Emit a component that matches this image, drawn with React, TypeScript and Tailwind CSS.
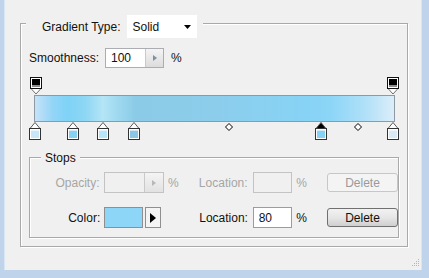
import type { ReactNode } from "react";

const colorStops = [
  { left: 0, color: "#c8e6f8" },
  { left: 38, color: "#86d0f2" },
  { left: 68, color: "#b7e4f6" },
  { left: 99, color: "#8bc6e3" },
  { left: 286, color: "#86d2f5", selected: true },
  { left: 358, color: "#d8ecf8" },
];

function OpacityStop() {
  return (
    <svg width="12" height="18" viewBox="0 0 12 18">
      <path d="M1 11.5 L6 17 L11 11.5" fill="#fff" stroke="#707070" />
      <rect x="0.5" y="0.5" width="11" height="11" fill="#fff" stroke="#111" />
      <rect x="2" y="2" width="8" height="6" fill="#000" />
      <rect x="2" y="8" width="8" height="2" fill="#8c8c8c" />
    </svg>
  );
}

function ColorStop({ color, selected }: { color: string; selected?: boolean }) {
  return (
    <svg width="12" height="18" viewBox="0 0 12 18">
      <path d="M6 0.5 L11 6.5 L1 6.5 Z" fill={selected ? "#000" : "#fff"} stroke="#5a5a5a" />
      <rect x="0.5" y="6.5" width="11" height="11" fill="#fff" stroke="#333" />
      <rect x="2" y="8" width="8" height="8" fill={color} />
      <rect x="2" y="8" width="8" height="1" fill="#fff" opacity="0.6" />
    </svg>
  );
}

function Diamond() {
  return (
    <svg width="8" height="8" viewBox="0 0 8 8">
      <path d="M4 0.5 L7.5 4 L4 7.5 L0.5 4 Z" fill="#fff" stroke="#000" />
    </svg>
  );
}

function SpinArrow({ fill }: { fill: string }) {
  return (
    <svg width="4" height="6" viewBox="0 0 4 6">
      <path d="M0 0 L4 3 L0 6 Z" fill={fill} />
    </svg>
  );
}

function Row({ children, className = "" }: { children: ReactNode; className?: string }) {
  return <div className={`flex h-[21px] items-center leading-none ${className}`}>{children}</div>;
}

export default function App() {
  return (
    <div className="flex h-[278px] w-[429px] flex-col overflow-hidden bg-[#f0f0f0] font-['Liberation_Sans',Arial,sans-serif] text-[12px] text-[#111]">
      <div className="flex flex-1">
        <div className="w-[5px] border-r border-[#d9e5f3] bg-[#bfd3eb]" />

        <div className="flex w-[416px] flex-col pl-[15px] pt-[23px]">
          {/* Gradient group */}
          <div className="w-[388px] border border-[#a9a9a9] pb-[8px] shadow-[inset_1px_1px_0_#fff,1px_1px_0_#fff]">
            <div className="-mt-[9px] ml-[5px] flex h-[23px] w-fit items-center bg-[#f0f0f0] pl-[16px] pr-[6px] leading-none">
              <span>Gradient Type:</span>
              <div className="ml-[6px] flex h-[23px] w-[70px] items-center justify-between bg-white pl-[6px] pr-[6px]">
                <span>Solid</span>
                <svg width="7" height="4" viewBox="0 0 7 4">
                  <path d="M0 0 L7 0 L3.5 4 Z" fill="#000" />
                </svg>
              </div>
            </div>

            <div className="ml-[8px] mt-[10px] flex h-[20px] items-center leading-none">
              <span className="w-[76px]">Smoothness:</span>
              <div className="flex h-[20px] w-[59px] border border-[#abadb3] bg-white">
                <span className="flex flex-1 items-center pl-[5px]">100</span>
                <div className="flex w-[18px] items-center justify-center border-l border-[#c9c9c9] bg-gradient-to-b from-[#f4f4f4] to-[#dcdcdc]">
                  <SpinArrow fill="#7c90a8" />
                </div>
              </div>
              <span className="ml-[7px]">%</span>
            </div>

            {/* Gradient editor */}
            <div className="ml-[8px] mt-[9px] w-[370px]">
              <div className="relative h-[18px]">
                <div className="absolute left-[1px] top-0">
                  <OpacityStop />
                </div>
                <div className="absolute left-[358px] top-0">
                  <OpacityStop />
                </div>
              </div>
              <div className="ml-[5px] h-[27px] w-[361px] border border-[#8d99a4] bg-[linear-gradient(to_right,#c6e2f9_0%,#93d5f7_5%,#7fd3f7_9%,#8ed6f4_14%,#b4e5f6_19%,#9fd9f0_23%,#8bcbe7_28%,#8ccdeb_50%,#87d3f5_75%,#8bd5f7_82%,#b0e0f8_92%,#dcedf9_100%)]" />
              <div className="relative h-[18px]">
                {colorStops.map((s, i) => (
                  <div key={i} className="absolute top-0" style={{ left: s.left }}>
                    <ColorStop color={s.color} selected={s.selected} />
                  </div>
                ))}
                <div className="absolute left-[196px] top-[1px]">
                  <Diamond />
                </div>
                <div className="absolute left-[325px] top-[1px]">
                  <Diamond />
                </div>
              </div>
            </div>

            {/* Stops group */}
            <div className="ml-[8px] mt-[17px] w-[370px] border border-[#a9a9a9] pb-[9px] shadow-[inset_1px_1px_0_#fff,1px_1px_0_#fff]">
              <div className="-mt-[8px] ml-[11px] flex h-[15px] w-fit items-center bg-[#f0f0f0] px-[4px] leading-none">
                Stops
              </div>

              <Row className="mt-[7px] text-[#a6a6a6]">
                <span className="w-[70px] text-right">Opacity:</span>
                <div className="ml-[4px] flex h-[21px] w-[61px] border border-[#c3c3c3] bg-[#f0f0f0]">
                  <span className="flex-1" />
                  <div className="flex w-[19px] items-center justify-center border-l border-[#c9c9c9] bg-gradient-to-b from-[#f4f4f4] to-[#e2e2e2]">
                    <SpinArrow fill="#b8b8b8" />
                  </div>
                </div>
                <span className="w-[35px] pl-[4px]">%</span>
                <span className="w-[50px]">Location:</span>
                <div className="ml-[4px] h-[21px] w-[40px] border border-[#c3c3c3] bg-[#f0f0f0]" />
                <span className="w-[35px] pl-[4px]">%</span>
                <div className="flex h-[19px] w-[71px] shrink-0 items-center justify-center rounded-[3px] border border-[#c4c8cc] bg-[#f4f4f4] text-[#9a9a9a]">
                  Delete
                </div>
              </Row>

              <Row className="mt-[14px]">
                <span className="w-[71px] text-right">Color:</span>
                <div className="ml-[4px] h-[21px] w-[39px] border border-[#8f8f8f] bg-[#8ed6f8]" />
                <div className="ml-[2px] flex h-[21px] w-[16px] items-center justify-center border border-[#8f8f8f] bg-[#f4f4f4]">
                  <svg width="6" height="10" viewBox="0 0 6 10">
                    <path d="M0 0 L6 5 L0 10 Z" fill="#000" />
                  </svg>
                </div>
                <span className="w-[39px]" />
                <span className="w-[50px]">Location:</span>
                <div className="ml-[4px] flex h-[21px] w-[40px] items-center border border-[#7da2ce] bg-white pl-[5px]">
                  80
                </div>
                <span className="w-[35px] pl-[4px]">%</span>
                <div className="flex h-[19px] w-[71px] shrink-0 items-center justify-center rounded-[3px] border border-[#707070] bg-gradient-to-b from-[#f2f2f2] via-[#e6e6e6] to-[#cfcfcf]">
                  Delete
                </div>
              </Row>
            </div>
          </div>

          <div className="mt-[12px] flex justify-end pr-[1px]">
            <svg width="8" height="8" viewBox="0 0 8 8">
              <rect x="6" y="0" width="1" height="1" fill="#b5b5b5" />
              <rect x="4" y="2" width="1" height="1" fill="#b5b5b5" />
              <rect x="6" y="2" width="1" height="1" fill="#b5b5b5" />
              <rect x="2" y="4" width="1" height="1" fill="#b5b5b5" />
              <rect x="4" y="4" width="1" height="1" fill="#b5b5b5" />
              <rect x="6" y="4" width="1" height="1" fill="#b5b5b5" />
              <rect x="0" y="6" width="1" height="1" fill="#b5b5b5" />
              <rect x="2" y="6" width="1" height="1" fill="#b5b5b5" />
              <rect x="4" y="6" width="1" height="1" fill="#b5b5b5" />
              <rect x="6" y="6" width="1" height="1" fill="#b5b5b5" />
            </svg>
          </div>
        </div>

        <div className="w-[8px] border-l border-[#d9e5f3] bg-[#bfd3eb]" />
      </div>
      <div className="h-[8px] bg-[#bfd3eb]" />
    </div>
  );
}
